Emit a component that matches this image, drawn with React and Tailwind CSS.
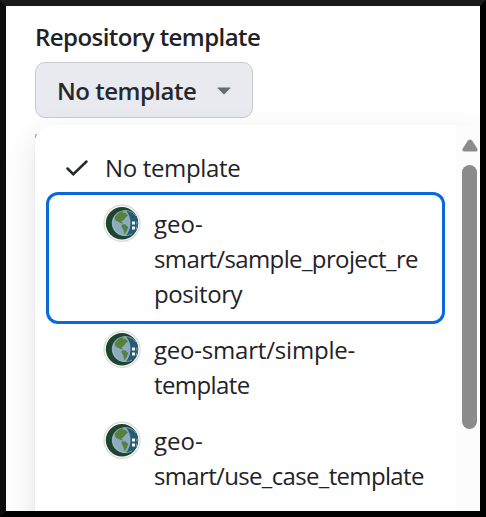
function Globe() {
  return (
    <svg viewBox="0 0 38 38" className="h-[38px] w-[38px] shrink-0">
      <circle cx="19" cy="19.300" r="18" fill="#fff" stroke="#dcdcdc" strokeWidth="1.4" />
      <circle cx="19" cy="19.300" r="16.2" fill="#1d4530" />
      <path d="M22 6.800a12.7 12.7 0 0 1 11.5 5.4 16.2 16.2 0 0 1 0 14.2A12.7 12.7 0 0 1 22 31.800Z" fill="#245c73" />
      <path d="M23 6.800A12.600 12.600 0 1 0 23 31.800C28.500 25 29.500 14 23 6.800Z" fill="#8cabc0" />
      <path d="M33 12A12.700 12.700 0 1 0 29 30" fill="none" stroke="#a5c0b4" strokeWidth="0.7" />
      <path d="M11.500 14C13 10 17 7.200 20.500 7L19.800 9 22 8.500 25 11.500 22.500 13.500 20.800 16 18.500 17.200 20 19.500 17.500 19 15 17.500 13 17Z" fill="#55803f" />
      <path d="M18.800 20.500 22 20.300 25.200 23 24 26.500 21.500 30.500 20.300 25.500 18.500 22.500Z" fill="#55803f" />
      <path d="M29 17.600h3v3h-3ZM29 22.600h3v3h-3Z" fill="#edf5f6" />
      <path d="M33.500 17.800h.8v2.600h-.8ZM33.300 22.800h.8v2.600h-.8Z" fill="#9dbcc8" />
    </svg>
  );
}

function Line({ text, className }) {
  return <span className={`block whitespace-nowrap ${className}`}>{text}</span>;
}

export default function App() {
  return (
    <div className="flex h-[517px] w-[486px] flex-col overflow-hidden border-6 border-t-[#1a1a1a] border-r-black border-b-black border-l-[#0d0d0d] bg-white pl-[29px] font-['Open_Sans','Noto_Sans',sans-serif] text-[24px] leading-[35px] text-[#1f2328]">
      <h1 className="mt-[13px] h-[35px] shrink-0 text-[24px] font-[560] tracking-[-0.55px] whitespace-nowrap">Repository template</h1>
      <button className="mt-[8px] flex h-[56px] w-[218px] shrink-0 items-center rounded-[10px] border border-[#c9cad1] bg-[#e9eaef] pl-[21px] text-left font-[560] whitespace-nowrap text-[#25292e]">
        <span className="w-[160px] tracking-[-0.5px]">No template</span>
        <svg viewBox="0 0 14 8" className="mt-[2px] h-[8px] w-[14px]">
          <path d="M1 .5h12q.8 0 .3.700L7.700 7q-.7.600-1.400 0L.7 1.200Q.2.500 1 .500Z" fill="#656d76" />
        </svg>
      </button>
      <div className="relative mt-[7px] flex h-[500px] w-[445px] shrink-0 rounded-tl-[20px] bg-white shadow-[0_2px_3px_rgba(0,0,0,0.08),0_12px_32px_rgba(60,65,75,0.14)]">
        <span className="absolute top-[9px] left-0 h-[4px] w-[2px] rounded-tl-full border-t border-l border-[#a89c96]" />
        <ul className="w-[421px] pt-[26px] pl-[11px]">
          <li className="flex h-[41px] items-start pl-[20px]">
            <svg viewBox="0 0 22 16" className="mt-[9px] h-[16px] w-[22px]">
              <path d="m1.500 8.500 5.800 5.700L20.500 1.500" fill="none" stroke="#25292e" strokeWidth="2.500" strokeLinecap="round" />
            </svg>
            <Line text="No template" className="-mt-px ml-[17px] tracking-[-0.35px]" />
          </li>
          <li className="flex h-[132px] w-[399px] items-start rounded-[12px] border-3 border-[#0969da] pt-[9px] pl-[54px]">
            <Globe />
            <div className="ml-[13px] mt-[2px]">
              <Line text="geo-" className="" />
              <Line text="smart/sample_project_re" className="tracking-[-0.62px]" />
              <Line text="pository" className="tracking-[-0.4px]" />
            </div>
          </li>
          <li className="flex h-[91px] items-start pt-[6px] pl-[57px]">
            <Globe />
            <div className="ml-[13px] mt-[2px]">
              <Line text="geo-smart/simple-" className="tracking-[-0.2px]" />
              <Line text="template" className="tracking-[-0.6px]" />
            </div>
          </li>
          <li className="flex h-[91px] items-start pt-[6px] pl-[57px]">
            <Globe />
            <div className="ml-[13px] mt-[2px]">
              <Line text="geo-" className="" />
              <Line text="smart/use_case_template" className="tracking-[-0.66px]" />
            </div>
          </li>
        </ul>
        <div className="flex w-[24px] flex-col bg-[#fcfcfc] pl-[6px]">
          <svg viewBox="0 0 16 13" className="mt-[14px] h-[13px] w-[16px]">
            <path d="M6 1.500q2-2 4 0l5.300 8q1 3-1.300 3H2q-2.300 0-1.300-3Z" fill="#8b8b8b" />
          </svg>
          <div className="mt-[13px] h-[264px] w-[15px] rounded-full bg-[#8b8b8b]" />
        </div>
      </div>
    </div>
  );
}
